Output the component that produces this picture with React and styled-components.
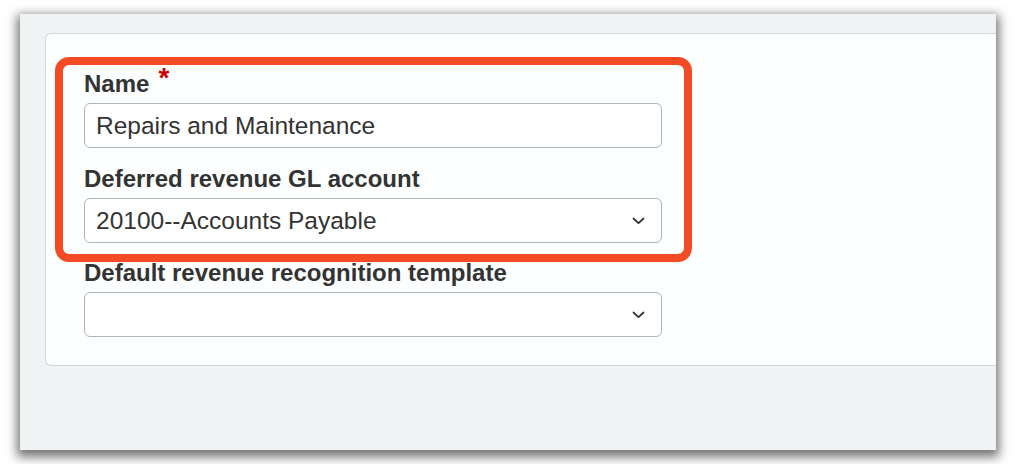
import React from "react";
import styled, { createGlobalStyle } from "styled-components";

const GlobalStyle = createGlobalStyle`
	body {
		margin: 0;
		background: #ffffff;
		font-family: "Liberation Sans", Arial, Helvetica, sans-serif;
	}
`;

const Page = styled.div`
	width: 1016px;
	height: 464px;
	padding: 14px 0 0 20px;
	box-sizing: border-box;
`;

const Frame = styled.div`
	width: 976px;
	height: 436px;
	box-sizing: border-box;
	padding: 19px 0 0 25px;
	background: #f0f3f4;
	overflow: hidden;
	box-shadow: 0 4px 10px 3px rgba( 0, 0, 0, 0.55 );
`;

const Card = styled.div`
	width: 980px;
	box-sizing: border-box;
	padding: 23px 0 28px 9px;
	background: #fdfefe;
	border: 1px solid #cfd8dc;
	border-right: none;
	border-radius: 6px 0 0 6px;
`;

const Highlight = styled.div`
	width: 637px;
	box-sizing: border-box;
	padding: 7px 22px 11px 21px;
	border: 8px solid #f44b24;
	border-radius: 14px;
`;

const Field = styled.div`
	display: flex;
	flex-direction: column;
	width: 578px;
	margin-top: ${ props => props.gap || 0 }px;
	margin-left: ${ props => props.indent || 0 }px;
`;

const Label = styled.label`
	display: flex;
	align-items: flex-start;
	gap: 9px;
	margin-bottom: 7px;
	color: #333333;
	font-size: 24px;
	font-weight: bold;
	line-height: 24px;
`;

const Required = styled.span`
	color: #cc0000;
	font-size: 28px;
	line-height: 20px;
	margin-top: -4px;
`;

const Input = styled.div`
	display: flex;
	align-items: center;
	justify-content: space-between;
	height: 45px;
	box-sizing: border-box;
	padding: 0 16px 0 11px;
	background: #ffffff;
	border: 1px solid #aab6bb;
	border-radius: 6px;
	color: #333333;
	font-size: 24.5px;
`;

const Chevron = () => (
	<svg width="13" height="8" viewBox="0 0 13 8">
		<polyline points="1.5,1.5 6.5,6.2 11.5,1.5" fill="none" stroke="#333" strokeWidth="1.8" strokeLinecap="round" strokeLinejoin="round" />
	</svg>
);

export default function App() {
	return <Page>
		<GlobalStyle />
		<Frame>
			<Card>
				<Highlight>
					<Field>
						<Label>Name <Required>*</Required></Label>
						<Input>Repairs and Maintenance</Input>
					</Field>
					<Field gap={ 19 }>
						<Label>Deferred revenue GL account</Label>
						<Input>20100--Accounts Payable<Chevron /></Input>
					</Field>
				</Highlight>
				<Field indent={ 29 } gap={ -1 }>
					<Label>Default revenue recognition template</Label>
					<Input><span /><Chevron /></Input>
				</Field>
			</Card>
		</Frame>
	</Page>;
}
